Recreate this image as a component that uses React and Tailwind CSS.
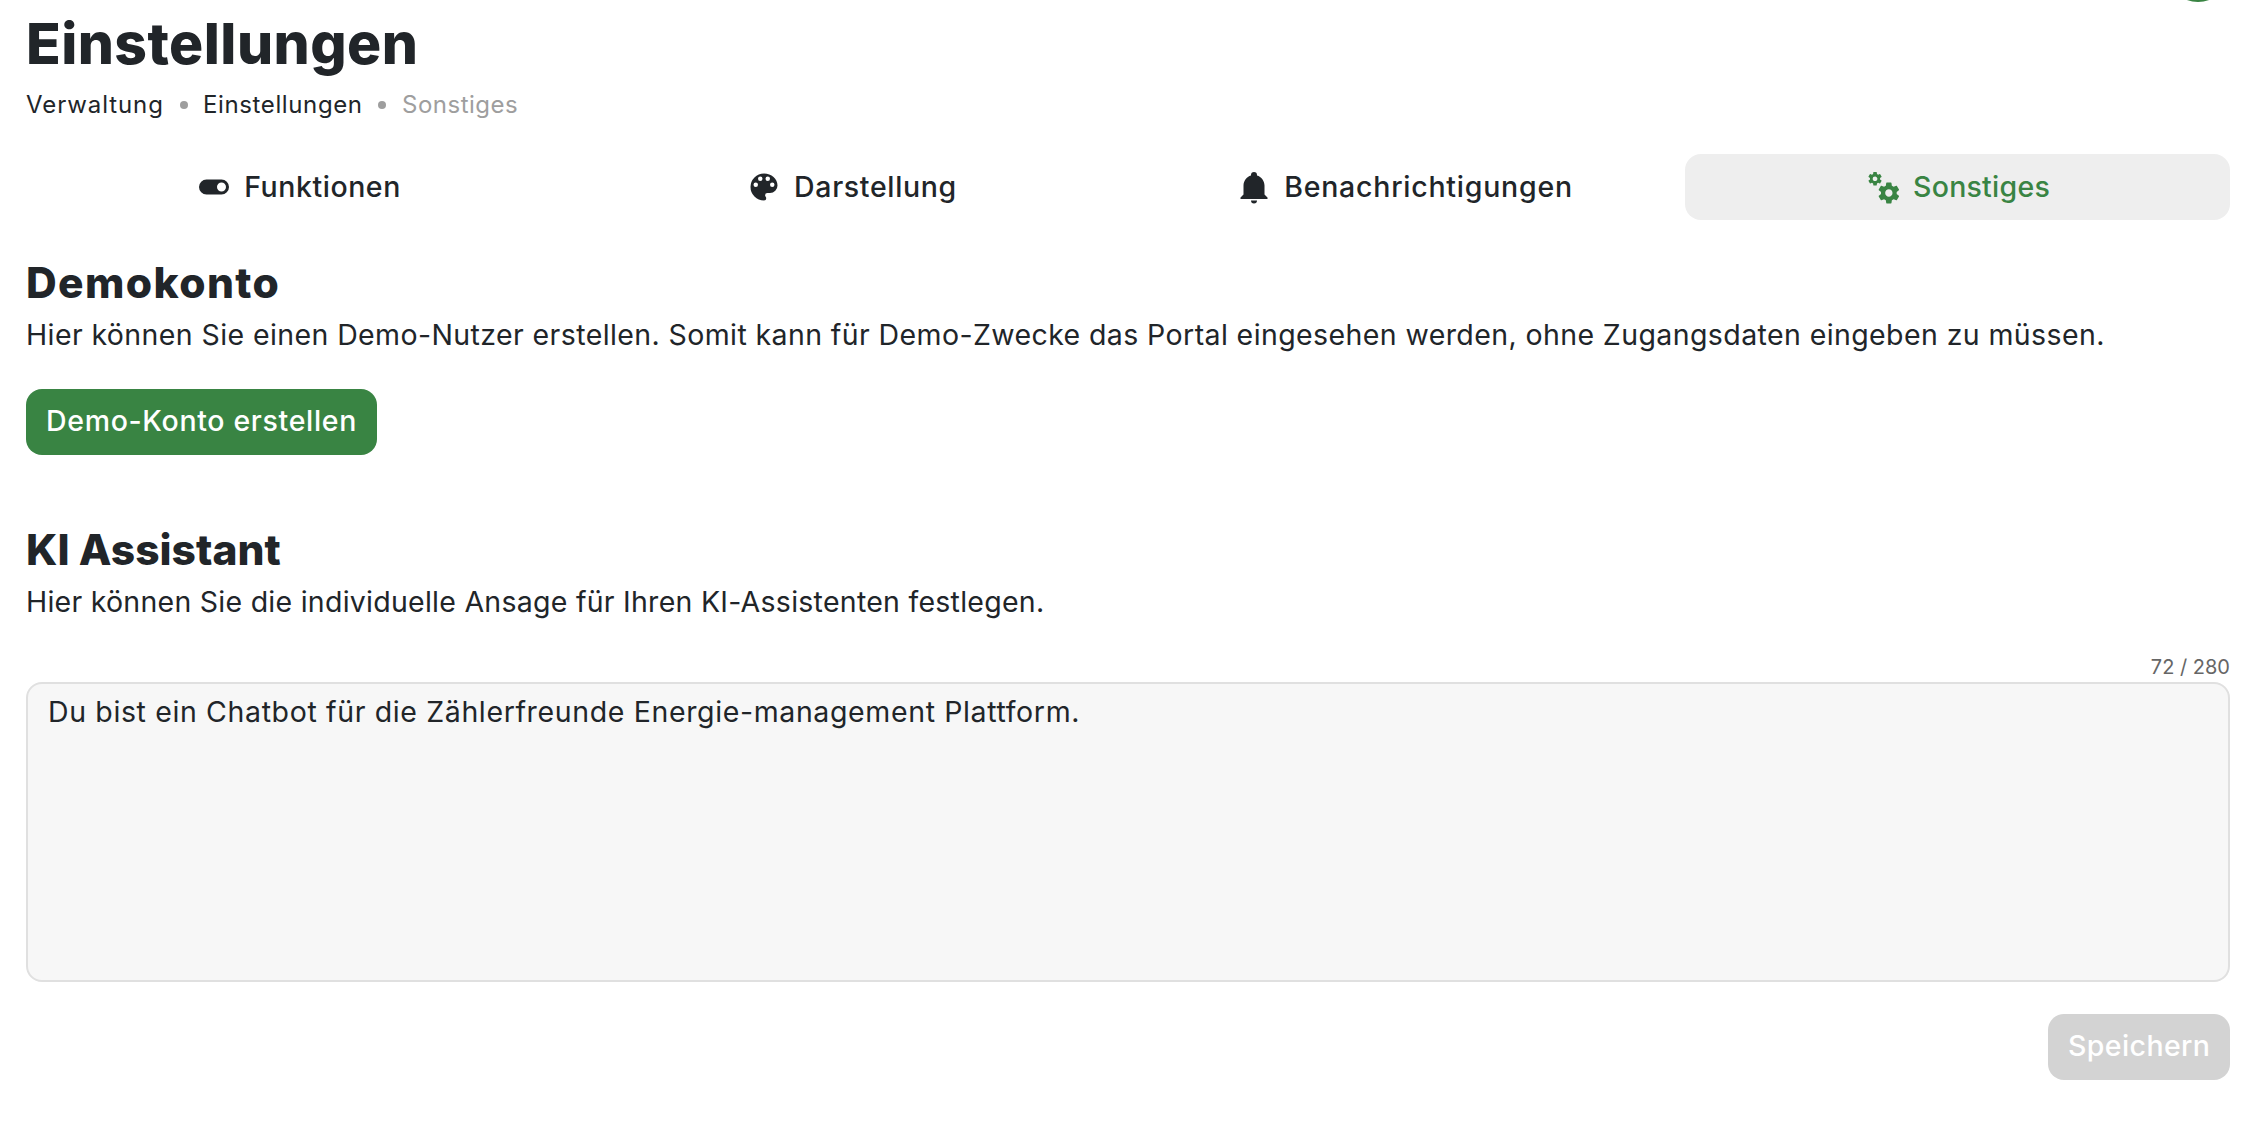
const ICONS = {
  toggle: "M17 7H7a5 5 0 0 0-5 5 5 5 0 0 0 5 5h10a5 5 0 0 0 5-5 5 5 0 0 0-5-5m0 8a3 3 0 0 1-3-3 3 3 0 0 1 3-3 3 3 0 0 1 3 3 3 3 0 0 1-3 3z",
  palette:
    "M17.5 12a1.5 1.5 0 0 1-1.5-1.5A1.5 1.5 0 0 1 17.5 9a1.5 1.5 0 0 1 1.5 1.5 1.5 1.5 0 0 1-1.5 1.5m-3-4A1.5 1.5 0 0 1 13 6.5 1.5 1.5 0 0 1 14.5 5 1.5 1.5 0 0 1 16 6.5 1.5 1.5 0 0 1 14.5 8m-5 0A1.5 1.5 0 0 1 8 6.5 1.5 1.5 0 0 1 9.5 5 1.5 1.5 0 0 1 11 6.5 1.5 1.5 0 0 1 9.5 8m-3 4A1.5 1.5 0 0 1 5 10.5 1.5 1.5 0 0 1 6.5 9 1.5 1.5 0 0 1 8 10.5 1.5 1.5 0 0 1 6.5 12M12 3a9 9 0 0 0-9 9 9 9 0 0 0 9 9 1.5 1.5 0 0 0 1.5-1.5c0-.39-.15-.74-.39-1-.23-.27-.38-.62-.38-1a1.5 1.5 0 0 1 1.5-1.5H16a5 5 0 0 0 5-5c0-4.42-4.03-8-9-8z",
  bell: "M21 19v1H3v-1l2-2v-6c0-3.1 2.03-5.83 5-6.71V4a2 2 0 0 1 2-2 2 2 0 0 1 2 2v.29c2.97.88 5 3.61 5 6.71v6l2 2m-7 2a2 2 0 0 1-2 2 2 2 0 0 1-2-2",
  cogs: "M15.9,18.45C17.25,18.45 18.35,17.35 18.35,16C18.35,14.65 17.25,13.55 15.9,13.55C14.54,13.55 13.45,14.65 13.45,16C13.45,17.35 14.54,18.45 15.9,18.45M21.1,16.68L22.58,17.84C22.71,17.95 22.75,18.13 22.66,18.29L21.26,20.71C21.17,20.86 21,20.92 20.83,20.86L19.09,20.16C18.73,20.44 18.33,20.67 17.91,20.85L17.64,22.7C17.62,22.87 17.47,23 17.3,23H14.5C14.32,23 14.18,22.87 14.15,22.7L13.89,20.85C13.46,20.67 13.07,20.44 12.71,20.16L10.96,20.86C10.81,20.92 10.62,20.86 10.54,20.71L9.14,18.29C9.05,18.13 9.09,17.95 9.22,17.84L10.7,16.68L10.65,16L10.7,15.31L9.22,14.16C9.09,14.05 9.05,13.86 9.14,13.71L10.54,11.29C10.62,11.13 10.81,11.07 10.96,11.13L12.71,11.84C13.07,11.56 13.46,11.32 13.89,11.15L14.15,9.29C14.18,9.13 14.32,9 14.5,9H17.3C17.47,9 17.62,9.13 17.64,9.29L17.91,11.15C18.33,11.32 18.73,11.56 19.09,11.84L20.83,11.13C21,11.07 21.17,11.13 21.26,11.29L22.66,13.71C22.75,13.86 22.71,14.05 22.58,14.16L21.1,15.31L21.15,16L21.1,16.68M6.69,8.07C7.56,8.07 8.26,7.37 8.26,6.5C8.26,5.63 7.56,4.92 6.69,4.92A1.58,1.58 0 0,0 5.11,6.5C5.11,7.37 5.82,8.07 6.69,8.07M10.03,6.94L11,7.68C11.07,7.75 11.09,7.87 11.03,7.97L10.13,9.53C10.08,9.63 9.96,9.67 9.86,9.63L8.74,9.18L8,9.62L7.81,10.81C7.79,10.92 7.7,11 7.59,11H5.79C5.67,11 5.58,10.92 5.56,10.81L5.4,9.62L4.64,9.18L3.5,9.63C3.41,9.67 3.3,9.63 3.24,9.53L2.34,7.97C2.28,7.87 2.31,7.75 2.39,7.68L3.34,6.94L3.31,6.5L3.34,6.06L2.39,5.32C2.31,5.25 2.28,5.13 2.34,5.03L3.24,3.47C3.3,3.37 3.41,3.33 3.5,3.37L4.63,3.82L5.4,3.38L5.56,2.19C5.58,2.08 5.67,2 5.79,2H7.59C7.7,2 7.79,2.08 7.81,2.19L8,3.38L8.74,3.82L9.86,3.37C9.96,3.33 10.08,3.37 10.13,3.47L11.03,5.03C11.09,5.13 11.07,5.25 11,5.32L10.03,6.06L10.06,6.5L10.03,6.94Z",
};

const TABS = [
  { label: "Funktionen", icon: "toggle", tracking: "tracking-[0.55px]" },
  { label: "Darstellung", icon: "palette", tracking: "tracking-[0.66px]" },
  { label: "Benachrichtigungen", icon: "bell", tracking: "tracking-[0.76px]" },
  { label: "Sonstiges", icon: "cogs", tracking: "tracking-[0.25px]", active: true },
];

function Icon({ name }) {
  return (
    <svg viewBox="0 0 24 24" className="size-9 shrink-0" fill="currentColor" aria-hidden="true">
      <path d={ICONS[name]} />
    </svg>
  );
}

function Tab({ label, icon, tracking, active }) {
  return (
    <button
      className={`flex h-[66px] items-center justify-center gap-3 rounded-2xl text-[28.5px] font-medium ${
        active ? "bg-[#eeeeee] text-[#398443]" : ""
      }`}
    >
      <Icon name={icon} />
      <span className={`pb-px leading-[42px] whitespace-nowrap ${tracking}`}>{label}</span>
    </button>
  );
}

function Dot() {
  return <span className="size-2 rounded-full bg-[#9e9e9e]" />;
}

function SectionTitle({ children, className }) {
  return <h2 className={`text-[42.5px] leading-[60px] font-extrabold ${className}`}>{children}</h2>;
}

export default function App() {
  return (
    <div className="relative h-[1132px] overflow-hidden bg-white pt-[11px] pr-8 pl-[26px] font-['Inter',sans-serif] text-[#212529]">
      <div className="absolute -top-[62px] right-8 size-16 rounded-full bg-[#398443]" />

      <h1 className="text-[57px] leading-[66px] font-extrabold tracking-[0.42px]">Einstellungen</h1>
      <nav className="mt-[10px] flex h-9 items-center text-[24px] leading-9">
        <span className="w-[154px] tracking-[0.9px]">Verwaltung</span>
        <Dot />
        <span className="ml-[15px] w-[175px] tracking-[0.62px]">Einstellungen</span>
        <Dot />
        <span className="ml-4 tracking-[0.5px] text-[#9e9e9e]">Sonstiges</span>
      </nav>

      <div className="mt-[31px] grid grid-cols-4 gap-2">
        {TABS.map((tab) => (
          <Tab key={tab.label} {...tab} />
        ))}
      </div>

      <section className="mt-[33px]">
        <SectionTitle className="tracking-[1.4px]">Demokonto</SectionTitle>
        <p className="mt-px text-[28.5px] leading-[42px] tracking-[0.4px] whitespace-nowrap">
          Hier können Sie einen Demo-Nutzer erstellen. Somit kann für Demo-Zwecke das Portal eingesehen werden, ohne
          Zugangsdaten eingeben zu müssen.
        </p>
        <button className="mt-[33px] flex h-[66px] w-[351px] items-center rounded-2xl bg-[#398443] pb-px pl-5 text-[28.5px] font-medium tracking-[0.67px] whitespace-nowrap text-white">
          Demo-Konto erstellen
        </button>
      </section>

      <section className="mt-[65px]">
        <SectionTitle className="tracking-normal">KI Assistant</SectionTitle>
        <p className="mt-px text-[28.5px] leading-[42px] tracking-[0.26px] whitespace-nowrap">
          Hier können Sie die individuelle Ansage für Ihren KI-Assistenten festlegen.
        </p>
        <div className="mt-[29px] text-right text-[20px] leading-[30px] text-[#666666]">72 / 280</div>
        <textarea
          spellCheck={false}
          className="block h-[300px] w-full resize-none rounded-2xl border-2 border-[#e0e0e0] bg-[#f7f7f7] px-5 pt-[7px] text-[28.5px] leading-[42px] tracking-[0.63px] outline-none"
          defaultValue="Du bist ein Chatbot für die Zählerfreunde Energie-management Plattform."
        />
        <div className="mt-8 flex justify-end">
          <button className="flex h-[66px] w-[182px] items-center rounded-2xl bg-[#d3d3d3] pb-px pl-5 text-[28.5px] font-medium tracking-[0.4px] text-white">
            Speichern
          </button>
        </div>
      </section>
    </div>
  );
}
